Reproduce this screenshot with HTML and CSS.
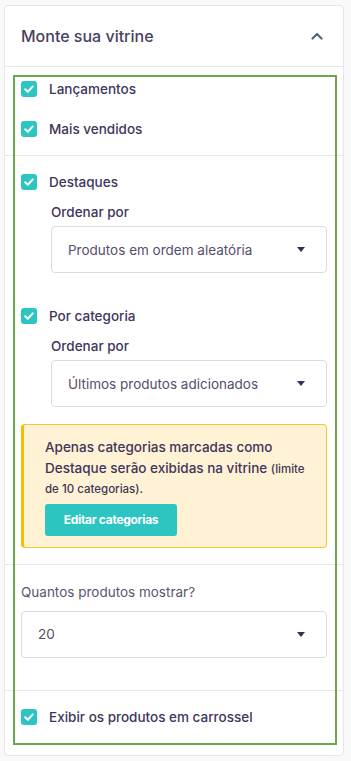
FILE: index.html
```html
<!DOCTYPE html>
<html lang="pt-BR">
<head>
    <meta charset="UTF-8">
    <meta name="viewport" content="width=device-width, initial-scale=1.0">
    <title>Monte sua vitrine</title>
    <link rel="stylesheet" href="styles.css">
</head>
<body>
    <div class="card">
        <div class="card-header">
            <h2>Monte sua vitrine</h2>
            <svg class="chevron" width="12" height="8" viewBox="0 0 12 8"><path d="M1.5 6.5 L6 2 L10.5 6.5" fill="none" stroke="#56657a" stroke-width="2.2" stroke-linecap="round" stroke-linejoin="round"/></svg>
        </div>

        <div class="card-body">
            <div class="highlight"></div>

            <div class="section section-lists">
                <div class="check-row">
                    <span class="check-box"><svg width="16" height="16" viewBox="0 0 16 16"><path d="M4.2 8.3 L6.8 10.8 L11.8 5.4" fill="none" stroke="#fff" stroke-width="2" stroke-linecap="round" stroke-linejoin="round"/></svg></span>
                    Lançamentos
                </div>
                <div class="check-row">
                    <span class="check-box"><svg width="16" height="16" viewBox="0 0 16 16"><path d="M4.2 8.3 L6.8 10.8 L11.8 5.4" fill="none" stroke="#fff" stroke-width="2" stroke-linecap="round" stroke-linejoin="round"/></svg></span>
                    Mais vendidos
                </div>
            </div>

            <div class="section section-order">
                <div class="check-row">
                    <span class="check-box"><svg width="16" height="16" viewBox="0 0 16 16"><path d="M4.2 8.3 L6.8 10.8 L11.8 5.4" fill="none" stroke="#fff" stroke-width="2" stroke-linecap="round" stroke-linejoin="round"/></svg></span>
                    Destaques
                </div>
                <div class="sub-group">
                    <div class="sub-label">Ordenar por</div>
                    <div class="select">
                        <span>Produtos em ordem aleatória</span>
                        <span class="caret"></span>
                    </div>
                </div>

                <div class="check-row check-gap">
                    <span class="check-box"><svg width="16" height="16" viewBox="0 0 16 16"><path d="M4.2 8.3 L6.8 10.8 L11.8 5.4" fill="none" stroke="#fff" stroke-width="2" stroke-linecap="round" stroke-linejoin="round"/></svg></span>
                    Por categoria
                </div>
                <div class="sub-group">
                    <div class="sub-label">Ordenar por</div>
                    <div class="select">
                        <span>Últimos produtos adicionados</span>
                        <span class="caret"></span>
                    </div>
                </div>

                <div class="notice">
                    <p>Apenas categorias marcadas como Destaque serão exibidas na vitrine <small>(limite de 10 categorias).</small></p>
                    <button class="btn-teal">Editar categorias</button>
                </div>
            </div>

            <div class="section section-count">
                <div class="field-label">Quantos produtos mostrar?</div>
                <div class="select select-full">
                    <span>20</span>
                    <span class="caret"></span>
                </div>
            </div>

            <div class="section section-carousel">
                <div class="check-row">
                    <span class="check-box"><svg width="16" height="16" viewBox="0 0 16 16"><path d="M4.2 8.3 L6.8 10.8 L11.8 5.4" fill="none" stroke="#fff" stroke-width="2" stroke-linecap="round" stroke-linejoin="round"/></svg></span>
                    Exibir os produtos em carrossel
                </div>
            </div>
        </div>
    </div>
</body>
</html>
```

FILE: styles.css
```css
/* vitrine - painel de configuração */
body {
    font-family: Inter, "Noto Sans", Arial, sans-serif;
    margin: 0;
    padding: 5px 7px 0 4px;
    background-color: #f9f9f9;
    color: #40365a;
}
.card {
    background-color: #fff;
    border: 1px solid #e6e6e8;
    border-radius: 4px;
}
.card-header {
    display: flex;
    align-items: center;
    justify-content: space-between;
    height: 60px;
    padding: 0 20px 0 16px;
    border-bottom: 1px solid #e8e8ea;
}
.card-header h2 {
    margin: 0;
    font-size: 16px;
    font-weight: 500;
    color: #4a4161;
}
.chevron {
    display: block;
}
.card-body {
    position: relative;
}
/* destaque verde sobre o conteúdo */
.highlight {
    position: absolute;
    top: 8px;
    left: 8px;
    right: 6px;
    bottom: 10px;
    border: 2px solid #6aa84f;
    pointer-events: none;
}
.section {
    padding: 0 16px;
    border-bottom: 1px solid #e8e8ea;
}
.section:last-child {
    border-bottom: none;
}
.section-lists {
    padding-top: 10px;
    padding-bottom: 14px;
    display: flex;
    flex-direction: column;
    gap: 16px;
}
.section-order {
    padding-top: 14px;
    padding-bottom: 16px;
}
.section-count {
    padding-top: 17px;
    padding-bottom: 32px;
}
.section-carousel {
    padding-top: 14px;
    padding-bottom: 26px;
}
.check-row {
    display: flex;
    align-items: center;
    gap: 12px;
    height: 24px;
    font-size: 13.5px;
    font-weight: 500;
    color: #40365a;
}
.check-gap {
    margin-top: 31px;
}
.check-box {
    width: 16px;
    height: 16px;
    border-radius: 3px;
    background-color: #2cc5c1;
    display: flex;
}
.sub-group {
    margin-left: 30px;
}
.sub-label {
    margin-top: 8px;
    font-size: 13.5px;
    font-weight: 500;
    line-height: 20px;
    color: #40365a;
}
.select {
    margin-top: 4px;
    height: 47px;
    box-sizing: border-box;
    border: 1px solid #dcdce0;
    border-radius: 4px;
    padding: 0 21px 0 16px;
    display: flex;
    align-items: center;
    justify-content: space-between;
    font-size: 13.5px;
    color: #574d6d;
}
.caret {
    width: 0;
    height: 0;
    border-left: 4.5px solid transparent;
    border-right: 4.5px solid transparent;
    border-top: 5px solid #3a2c55;
}
.select-full {
    margin-top: 9px;
}
.field-label {
    font-size: 13.5px;
    line-height: 20px;
    color: #5c5472;
}
.notice {
    margin-top: 17px;
    background-color: #fff2d5;
    border: 1px solid #f6c534;
    border-left: 3px solid #f7bd00;
    border-radius: 4px;
    padding: 12px 14px 11px 21px;
}
.notice p {
    margin: 0 0 5px;
    font-size: 13.5px;
    font-weight: 500;
    line-height: 20.5px;
    color: #40365a;
}
.notice small {
    font-size: 11.5px;
    line-height: 1;
}
.btn-teal {
    display: block;
    background-color: #2cc5c1;
    color: #fff;
    border: none;
    border-radius: 3px;
    height: 32px;
    width: 132px;
    font-family: inherit;
    font-size: 12px;
    font-weight: 700;
    letter-spacing: -0.3px;
    cursor: pointer;
}
```
